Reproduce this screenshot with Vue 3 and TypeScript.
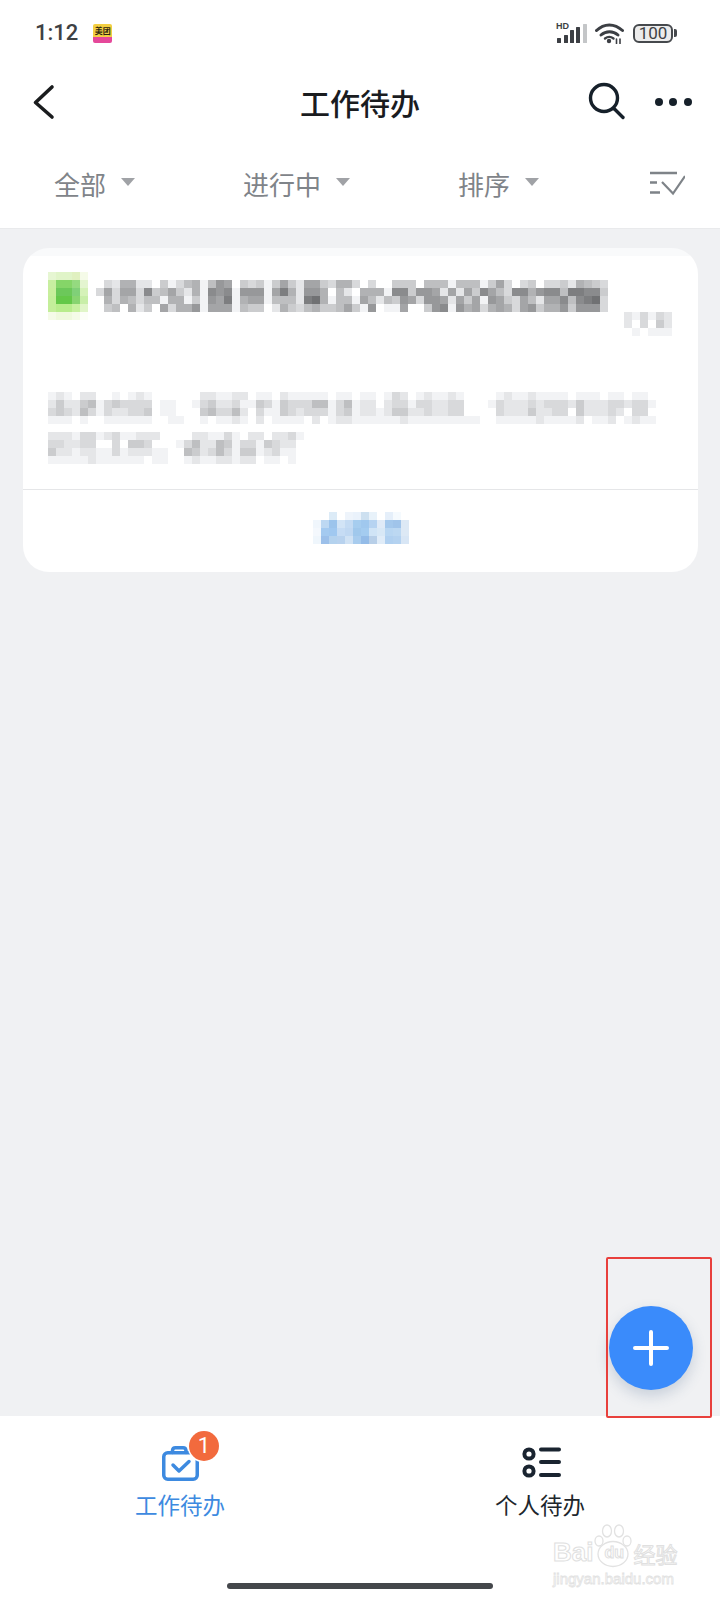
<script setup lang="ts">
interface Cell { x: number; y: number; fill: string }
interface Block { w: number; h: number; cells: Cell[] }

const size = 8

function gray(rows: string[]): Block {
  const cells: Cell[] = []
  rows.forEach((row, y) => {
    row.split('').forEach((c, x) => {
      const level = parseInt(c, 16)
      if (level > 0) {
        const v = 255 - level * 13
        cells.push({ x: x * size, y: y * size, fill: `rgb(${v},${v + 1},${v + 3})` })
      }
    })
  })
  return { w: Math.max(...rows.map((r) => r.length)) * size, h: rows.length * size, cells }
}

function colored(rows: string[][]): Block {
  const cells: Cell[] = []
  rows.forEach((row, y) => {
    row.forEach((fill, x) => cells.push({ x: x * size, y: y * size, fill }))
  })
  return { w: rows[0].length * size, h: rows.length * size, cells }
}

const green = colored([
  ['#e6f6d2', '#e0f4c8', '#e0f4c8', '#e0f0c0', '#f5fbe8'],
  ['#c8eea0', '#85d568', '#85d568', '#95da80', '#e4f5d0'],
  ['#c8ee9c', '#6cc85a', '#6cc85a', '#80d078', '#d5f2b8'],
  ['#c4ee9a', '#64c848', '#64c848', '#88d470', '#c8eea8'],
  ['#c4ee9a', '#b8ec8c', '#b8ec8c', '#c8f0a0', '#e0f5c8'],
  ['#f5fbe8', '#eff9dd', '#eff9dd', '#f5fbe8', '#fcfef8']
])

const title = gray([
  '0326622041356158704341474277436' + '630300444055515551473034033426543',
  '37377394574261989188817a6288605' + '2066619948872727497539968995aa994',
  '0636535516614187a167715552ab615' + '517525487388727471874375277959ab3',
  '0450624073668177715440264356445' + '741801170048918673676378466848883'
])

const meta = gray(['2131320', '2030420', '0101110'])

const bodyOne = gray([
  '121022001012100000022112201102111110110' + '1101320121121000012112111101110110110',
  '242245134333301100134223114314333551351' + '2202331332233000132223233324222332331',
  '343253132233401100045335203114323331341' + '2212442232233000032224223304222320330',
  '111010011111100110010112102011110201221' + '1111121111111110011111211112011201211'
])

const bodyTwo = gray([
  '22213312311222000022113102202231',
  '33223300304430001352254133143220',
  '42212211312221100542353144123110',
  '11111211111101100121122122011010'
])

const action = colored([
  ['#ffffff', '#ffffff', '#dcebf7', '#ffffff', '#eef4fb', '#eaf2fb', '#cde0f0', '#e8f2fa', '#ffffff', '#e5effa', '#f5fafe', '#ffffff'],
  ['#f0f6fc', '#bdd8f2', '#9cc4ec', '#d2e4f6', '#c4dbf3', '#a6cdef', '#a0c8ee', '#b6d3f1', '#dfeaf7', '#a4c8ec', '#a0c4ea', '#dde9f5'],
  ['#f4f8fd', '#a4caf0', '#a0c8f0', '#c6dcf4', '#c0d8f2', '#a0c8ec', '#a4ccf0', '#d0e4f6', '#d8e8f6', '#b8d6f2', '#bcd8f2', '#dde9f5'],
  ['#eff6fc', '#9cc0ea', '#b4d2ee', '#b8d2ee', '#d0e2f4', '#a8ccee', '#94bce8', '#b8cfe8', '#e0ecf8', '#b0d0f0', '#b4d2f0', '#d8e6f5']
])

const filters = ['全部', '进行中', '排序']
const bars = [
  { x: 1, y: 14, h: 5, c: '#3c3f44' },
  { x: 8, y: 11, h: 8, c: '#3c3f44' },
  { x: 14, y: 6, h: 13, c: '#3c3f44' },
  { x: 20, y: 3, h: 16, c: '#3c3f44' },
  { x: 27, y: 0, h: 19, c: '#c4c6c8' }
]
</script>

<template>
  <div class="page">
    <div class="status">
      <div class="status-left">
        <span class="time">1:12</span>
        <div class="app-icon">
          <span class="app-top">美团</span>
          <span class="app-bottom"></span>
        </div>
      </div>
      <div class="status-right">
        <div class="signal">
          <span class="hd">HD</span>
          <svg width="32" height="19" viewBox="0 0 32 19">
            <rect v-for="b in bars" :key="b.x" :x="b.x" :y="b.y" width="4" :height="b.h" :fill="b.c" rx="0.5" />
          </svg>
        </div>
        <svg class="wifi" width="29" height="21" viewBox="0 0 29 21" fill="none" stroke="#3c3f44" stroke-width="3" stroke-linecap="round">
          <path d="M1.5 7.5C9 0 19.5 0 27.5 7.5" />
          <path d="M6 12C11 7.5 18 7.5 23 12" />
          <path d="M10 15.5C12.5 13.6 16 13.6 18.5 15.5" stroke-width="2.4" />
          <circle cx="14" cy="18" r="2.2" fill="#3c3f44" stroke="none" />
          <path d="M21.5 20.5V16M25 20.5V16" stroke-width="1.6" />
        </svg>
        <div class="battery">
          <div class="battery-box">100</div>
          <span class="battery-nub"></span>
        </div>
      </div>
    </div>

    <div class="nav">
      <div class="nav-left">
        <svg width="24" height="40" viewBox="0 0 24 40" fill="none" stroke="#1a1c1e" stroke-width="3.6" stroke-linecap="round" stroke-linejoin="round">
          <path d="M20 5L3.5 20.5L20 35" />
        </svg>
      </div>
      <div class="nav-title">工作待办</div>
      <div class="nav-right">
        <svg width="40" height="40" viewBox="0 0 40 40" fill="none" stroke="#16202a" stroke-width="3.4" stroke-linecap="round">
          <circle cx="18" cy="16" r="13.5" />
          <path d="M28.5 27L37 35.5" />
        </svg>
        <svg width="40" height="40" viewBox="0 0 40 40" fill="#16202a">
          <circle cx="6" cy="20" r="4" />
          <circle cx="20" cy="20" r="4" />
          <circle cx="35" cy="20" r="4" />
        </svg>
      </div>
    </div>

    <div class="filters">
      <div v-for="f in filters" :key="f" class="filter">
        <span>{{ f }}</span>
        <i class="caret"></i>
      </div>
      <svg class="filter-icon" width="35" height="26" viewBox="0 0 35 26" fill="none" stroke="#7e8388" stroke-width="2.6">
        <path d="M0 2H27M0 11.5H7M0 21.5H10" />
        <path d="M12 11L23 22.5L35 5" stroke-width="2.2" />
      </svg>
    </div>

    <main class="main">
      <section class="card">
        <div class="card-main">
          <div class="title-row">
            <svg class="mosaic" :width="green.w" :height="green.h">
              <rect v-for="(c, i) in green.cells" :key="i" :x="c.x" :y="c.y" width="8" height="8" :fill="c.fill" />
            </svg>
            <svg class="mosaic title-mosaic" :width="title.w" :height="title.h">
              <rect v-for="(c, i) in title.cells" :key="i" :x="c.x" :y="c.y" width="8" height="8" :fill="c.fill" />
            </svg>
            <svg class="mosaic meta-mosaic" :width="meta.w" :height="meta.h">
              <rect v-for="(c, i) in meta.cells" :key="i" :x="c.x" :y="c.y" width="8" height="8" :fill="c.fill" />
            </svg>
          </div>
          <div class="body-lines">
            <svg class="mosaic" :width="bodyOne.w" :height="bodyOne.h">
              <rect v-for="(c, i) in bodyOne.cells" :key="i" :x="c.x" :y="c.y" width="8" height="8" :fill="c.fill" />
            </svg>
            <svg class="mosaic" :width="bodyTwo.w" :height="bodyTwo.h">
              <rect v-for="(c, i) in bodyTwo.cells" :key="i" :x="c.x" :y="c.y" width="8" height="8" :fill="c.fill" />
            </svg>
          </div>
        </div>
        <div class="card-foot">
          <svg class="mosaic" :width="action.w" :height="action.h">
            <rect v-for="(c, i) in action.cells" :key="i" :x="c.x" :y="c.y" width="8" height="8" :fill="c.fill" />
          </svg>
        </div>
      </section>

      <button class="fab" type="button" aria-label="新建">
        <svg width="36" height="36" viewBox="0 0 36 36" stroke="#fff" stroke-width="4" stroke-linecap="round">
          <path d="M18 2V34M2 18H34" />
        </svg>
      </button>
      <div class="annotation"></div>
    </main>

    <footer class="tabbar">
      <div class="tabs">
        <div class="tab active">
          <div class="tab-icon">
            <svg width="44" height="44" viewBox="0 0 44 44" fill="none" stroke="#3d8ae0" stroke-width="3.5" stroke-linecap="round" stroke-linejoin="round">
              <rect x="4.75" y="8.75" width="33.5" height="26.5" rx="4" />
              <path d="M13.5 8.5V6.5A3 3 0 0 1 16.5 3.75H24A3 3 0 0 1 27 6.5V8.5" />
              <path d="M14 21L20 27L30 17.5" />
            </svg>
            <span class="badge">1</span>
          </div>
          <span class="tab-label">工作待办</span>
        </div>
        <div class="tab">
          <div class="tab-icon">
            <svg width="44" height="44" viewBox="0 0 44 44" fill="none" stroke="#1a2430" stroke-width="4" stroke-linecap="round">
              <circle cx="10" cy="10" r="4.6" />
              <circle cx="10" cy="27" r="4.6" />
              <path d="M22 5.5H40M22 18H40M22 31H40" />
            </svg>
          </div>
          <span class="tab-label">个人待办</span>
        </div>
      </div>
      <div class="home-bar"></div>
    </footer>

    <div class="watermark">
      <div class="wm-top">
        <span class="wm-bai">Bai</span>
        <span class="wm-paw">
          <svg width="38" height="44" viewBox="0 0 38 44" fill="#fff" stroke="#e2e2e2" stroke-width="1.3">
            <ellipse cx="5" cy="17" rx="4" ry="5" />
            <ellipse cx="13" cy="7" rx="4.5" ry="6" />
            <ellipse cx="25" cy="7" rx="4.5" ry="6" />
            <ellipse cx="33" cy="17" rx="4" ry="5" />
            <ellipse cx="19" cy="30" rx="15" ry="12.5" />
          </svg>
          <span class="wm-du">du</span>
        </span>
        <span class="wm-jy">经验</span>
      </div>
      <div class="wm-url">jingyan.baidu.com</div>
    </div>
  </div>
</template>

<style>
html,
body {
  margin: 0;
  background: #fff;
}
</style>

<style scoped>
.page {
  position: relative;
  width: 720px;
  height: 1600px;
  display: flex;
  flex-direction: column;
  overflow: hidden;
  background: #fff;
  font-family: "Noto Sans CJK SC", "Noto Sans", sans-serif;
}

.status {
  height: 66px;
  flex: none;
  display: flex;
  align-items: center;
  justify-content: space-between;
  padding: 0 43px 0 35px;
}

.status-left,
.status-right {
  display: flex;
  align-items: center;
}

.time {
  font-family: Roboto, sans-serif;
  font-size: 22px;
  font-weight: 500;
  color: #3e4144;
  line-height: 30px;
}

.app-icon {
  width: 19px;
  height: 19px;
  margin-left: 15px;
  display: flex;
  flex-direction: column;
  overflow: hidden;
  border-radius: 2px;
}

.app-top {
  height: 13px;
  background: #f3cf42;
  color: #2b2410;
  font-size: 8px;
  font-weight: 700;
  line-height: 13px;
  text-align: center;
}

.app-bottom {
  height: 6px;
  background: #e5489a;
}

.signal {
  position: relative;
  width: 32px;
  height: 20px;
  padding-top: 1px;
  box-sizing: border-box;
  align-self: flex-end;
}

.signal svg {
  display: block;
  position: relative;
}

.hd {
  position: absolute;
  left: 0;
  top: -1px;
  font-family: "Liberation Sans", sans-serif;
  font-size: 9px;
  font-weight: 700;
  line-height: 9px;
  color: #3c3f44;
  z-index: 1;
}

.status-right {
  height: 20px;
}

.wifi {
  margin-left: 7px;
}

.battery {
  display: flex;
  align-items: center;
  margin-left: 9px;
}

.battery-box {
  width: 40px;
  height: 19px;
  box-sizing: border-box;
  border: 2px solid #46494d;
  border-radius: 6px;
  background: #ececec;
  font-family: Roboto, sans-serif;
  font-size: 17px;
  line-height: 15px;
  color: #3e4144;
  text-align: center;
}

.battery-nub {
  width: 3px;
  height: 8px;
  margin-left: 1px;
  background: #46494d;
  border-radius: 0 2px 2px 0;
}

.nav {
  height: 72px;
  flex: none;
  display: grid;
  grid-template-columns: 1fr auto 1fr;
  align-items: center;
  padding: 0 27px;
  box-sizing: border-box;
}

.nav svg {
  display: block;
}

.nav-left {
  display: flex;
  padding-left: 5px;
}

.nav-title {
  font-size: 30px;
  font-weight: 500;
  color: #1a1c1f;
  line-height: 40px;
}

.nav-right {
  display: flex;
  justify-content: flex-end;
  gap: 27px;
}

.filters {
  height: 91px;
  flex: none;
  box-sizing: border-box;
  display: flex;
  align-items: center;
  gap: 108px;
  padding: 1px 35px 0 54px;
  border-bottom: 1px solid #e9eaec;
}

.filter-icon {
  margin-left: auto;
}

.filter {
  display: flex;
  align-items: center;
  gap: 15px;
  font-size: 26px;
  line-height: 36px;
  color: #7f8489;
}

.caret {
  width: 0;
  height: 0;
  margin-top: -4px;
  border-left: 7px solid transparent;
  border-right: 7px solid transparent;
  border-top: 8px solid #a0a2a6;
}

.main {
  position: relative;
  flex: 1;
  background: #f0f1f3;
  padding: 19px 22px 0 23px;
}

.card {
  height: 324px;
  border-radius: 26px;
  background: linear-gradient(#f9fafb 0, #f9fafb 8px, #fff 8px);
  overflow: hidden;
  display: flex;
  flex-direction: column;
}

.card-main {
  height: 242px;
  flex: none;
  box-sizing: border-box;
  padding: 24px 0 0 25px;
  border-bottom: 1px solid #e5e6e8;
}

.mosaic {
  display: block;
  flex: none;
  shape-rendering: crispEdges;
}

.title-row {
  display: flex;
  align-items: flex-start;
}

.title-mosaic {
  margin: 8px 0 0 8px;
}

.meta-mosaic {
  margin: 40px 0 0 16px;
}

.body-lines {
  display: flex;
  flex-direction: column;
  gap: 8px;
  margin-top: 56px;
}

.card-foot {
  flex: 1;
  display: flex;
  justify-content: center;
  padding-top: 22px;
  box-sizing: border-box;
}

.fab {
  position: absolute;
  right: 27px;
  bottom: 26px;
  width: 84px;
  height: 84px;
  padding: 0;
  border: 0;
  border-radius: 50%;
  background: #3a8bfb;
  box-shadow: 0 6px 14px rgba(60, 90, 130, 0.22);
  display: flex;
  align-items: center;
  justify-content: center;
}

.annotation {
  position: absolute;
  right: 8px;
  bottom: -2px;
  width: 106px;
  height: 161px;
  box-sizing: border-box;
  border: 2px solid #e8403c;
  border-radius: 2px;
  z-index: 2;
}

.tabbar {
  height: 184px;
  flex: none;
  background: #fff;
  display: flex;
  flex-direction: column;
}

.tabs {
  display: flex;
  height: 106px;
  flex: none;
}

.tab {
  flex: 1;
  display: flex;
  flex-direction: column;
  align-items: center;
  padding-top: 28px;
  box-sizing: border-box;
  color: #20262c;
}

.tab.active {
  color: #3d8ae0;
}

.tab-icon {
  position: relative;
  width: 44px;
  height: 44px;
  margin-left: 2px;
}

.tab-icon svg {
  display: block;
}

.badge {
  position: absolute;
  left: 30px;
  top: -13px;
  width: 30px;
  height: 30px;
  border-radius: 50%;
  background: #f26a3d;
  box-shadow: 0 0 0 1.5px #fff;
  color: #fff;
  font-family: Roboto, sans-serif;
  font-size: 22px;
  line-height: 30px;
  text-align: center;
}

.tab-label {
  margin-top: 1px;
  font-size: 22.5px;
  line-height: 30px;
}

.home-bar {
  width: 266px;
  height: 6px;
  margin: 61px auto 0;
  border-radius: 3px;
  background: #44474b;
}

.watermark {
  position: absolute;
  left: 553px;
  top: 1522px;
  width: 130px;
}

.wm-top {
  display: flex;
  align-items: flex-end;
  height: 46px;
  color: #fff;
  -webkit-text-stroke: 1px #e0e0e0;
  font-family: "Liberation Sans", sans-serif;
}

.wm-bai {
  font-size: 26px;
  font-weight: 700;
  line-height: 32px;
}

.wm-paw {
  position: relative;
  width: 38px;
  height: 44px;
  margin-left: 1px;
  flex: none;
}

.wm-paw svg {
  display: block;
}

.wm-du {
  position: absolute;
  left: 10px;
  bottom: 5px;
  font-size: 16px;
  line-height: 20px;
  font-weight: 700;
}

.wm-jy {
  font-family: "Noto Sans CJK SC", sans-serif;
  font-size: 22px;
  line-height: 30px;
  margin-left: 1px;
  white-space: nowrap;
}

.wm-url {
  margin-top: 3px;
  font-family: "Liberation Sans", sans-serif;
  font-size: 15px;
  line-height: 16px;
  color: #fff;
  -webkit-text-stroke: 0.8px #e2e2e2;
  white-space: nowrap;
}
</style>
